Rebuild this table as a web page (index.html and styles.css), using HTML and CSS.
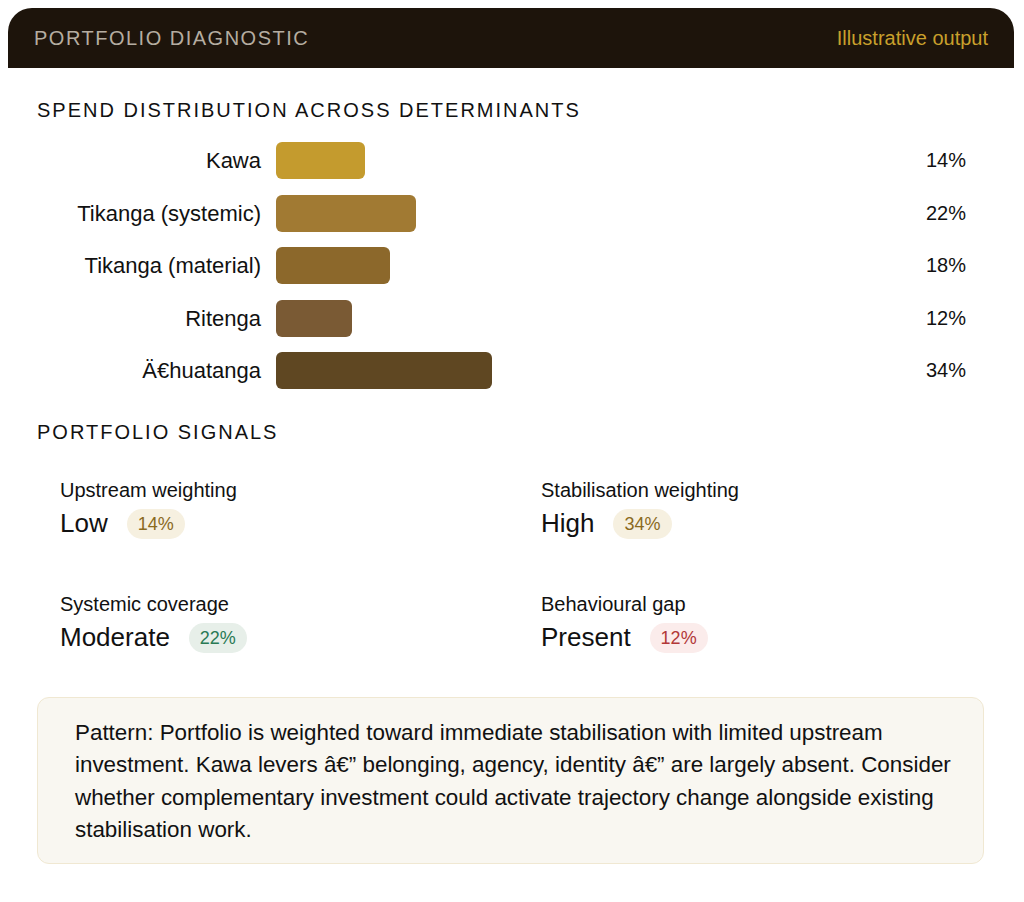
FILE: index.html
```html
<!DOCTYPE html>
<html lang="en">
<head>
<meta charset="utf-8">
<title>Portfolio Diagnostic</title>
<link rel="stylesheet" href="styles.css">
</head>
<body>
<div class="card">
  <header class="head">
    <span class="head-title">PORTFOLIO DIAGNOSTIC</span>
    <span class="head-note">Illustrative output</span>
  </header>
  <main class="content">
    <h2 class="section-title">SPEND DISTRIBUTION ACROSS DETERMINANTS</h2>
    <div class="bars">
      <div class="bar-label">Kawa</div>
      <div class="track"><div class="bar c1" style="width:14%"></div></div>
      <div class="bar-pct">14%</div>

      <div class="bar-label">Tikanga (systemic)</div>
      <div class="track"><div class="bar c2" style="width:22%"></div></div>
      <div class="bar-pct">22%</div>

      <div class="bar-label">Tikanga (material)</div>
      <div class="track"><div class="bar c3" style="width:18%"></div></div>
      <div class="bar-pct">18%</div>

      <div class="bar-label">Ritenga</div>
      <div class="track"><div class="bar c4" style="width:12%"></div></div>
      <div class="bar-pct">12%</div>

      <div class="bar-label">Ä€huatanga</div>
      <div class="track"><div class="bar c5" style="width:34%"></div></div>
      <div class="bar-pct">34%</div>
    </div>

    <h2 class="section-title signals-title">PORTFOLIO SIGNALS</h2>
    <div class="signals">
      <div class="signal">
        <div class="signal-label">Upstream weighting</div>
        <div class="signal-value"><span class="signal-word">Low</span><span class="pill pill-gold">14%</span></div>
      </div>
      <div class="signal">
        <div class="signal-label">Stabilisation weighting</div>
        <div class="signal-value"><span class="signal-word">High</span><span class="pill pill-gold">34%</span></div>
      </div>
      <div class="signal">
        <div class="signal-label">Systemic coverage</div>
        <div class="signal-value"><span class="signal-word">Moderate</span><span class="pill pill-green">22%</span></div>
      </div>
      <div class="signal">
        <div class="signal-label">Behavioural gap</div>
        <div class="signal-value"><span class="signal-word">Present</span><span class="pill pill-red">12%</span></div>
      </div>
    </div>

    <div class="pattern">
      <p>Pattern: Portfolio is weighted toward immediate stabilisation with limited upstream investment. Kawa levers â€” belonging, agency, identity â€” are largely absent. Consider whether complementary investment could activate trajectory change alongside existing stabilisation work.</p>
    </div>
  </main>
</div>
</body>
</html>
```

FILE: styles.css
```css
html, body {
  background: #ffffff;
}

body {
  margin: 8px;
  font-family: "Liberation Sans", Arial, Helvetica, sans-serif;
  color: #111111;
}

.card {
  width: 1006px;
}

.head {
  height: 60px;
  background: #1d140b;
  border-radius: 24px 24px 0 0;
  padding: 0 26px 0 26px;
  display: flex;
  align-items: center;
  justify-content: space-between;
}

.head-title {
  font-size: 20px;
  letter-spacing: 1.5px;
  color: #b5ada1;
}

.head-note {
  font-size: 20px;
  color: #c9a02c;
}

.content {
  padding: 0 30px 0 29px;
}

.section-title {
  margin: 30px 0 0 0;
  font-size: 20px;
  line-height: 24px;
  font-weight: normal;
  letter-spacing: 2px;
  color: #111111;
}

.bars {
  margin-top: 20px;
  display: grid;
  grid-template-columns: 224px 1fr 58px;
  column-gap: 15px;
  row-gap: 15.5px;
  align-items: center;
}

.bar-label {
  text-align: right;
  font-size: 22px;
  line-height: 37px;
  color: #111111;
}

.track {
  height: 37px;
}

.bar {
  height: 37px;
  border-radius: 6px;
}

.c1 { background: #c49b2e; }
.c2 { background: #a17a33; }
.c3 { background: #8c682b; }
.c4 { background: #7a5a34; }
.c5 { background: #5f4722; }

.bar-pct {
  font-size: 20px;
  color: #111111;
}

.signals-title {
  margin-top: 30.5px;
}

.signals {
  margin-top: 34px;
  padding-left: 23px;
  display: grid;
  grid-template-columns: 443px 1fr;
  column-gap: 38px;
  row-gap: 52px;
}

.signal-label {
  font-size: 20px;
  line-height: 24px;
  color: #111111;
}

.signal-value {
  margin-top: 6px;
  height: 32px;
  display: flex;
  align-items: center;
  gap: 19px;
}

.signal-word {
  font-size: 26px;
  color: #111111;
}

.pill {
  font-size: 18px;
  line-height: 30px;
  padding: 0 11px;
  border-radius: 15px;
}

.pill-gold {
  background: #f6f0e0;
  color: #8a6a1e;
}

.pill-green {
  background: #e7efe9;
  color: #2a7a55;
}

.pill-red {
  background: #fbeceb;
  color: #b23838;
}

.pattern {
  margin-top: 43px;
  background: #f9f7f1;
  border: 1px solid #f0e8d2;
  border-radius: 12px;
  padding: 19px 18px 16px 37px;
}

.pattern p {
  margin: 0;
  font-size: 22.4px;
  line-height: 32.5px;
  color: #111111;
}
```
